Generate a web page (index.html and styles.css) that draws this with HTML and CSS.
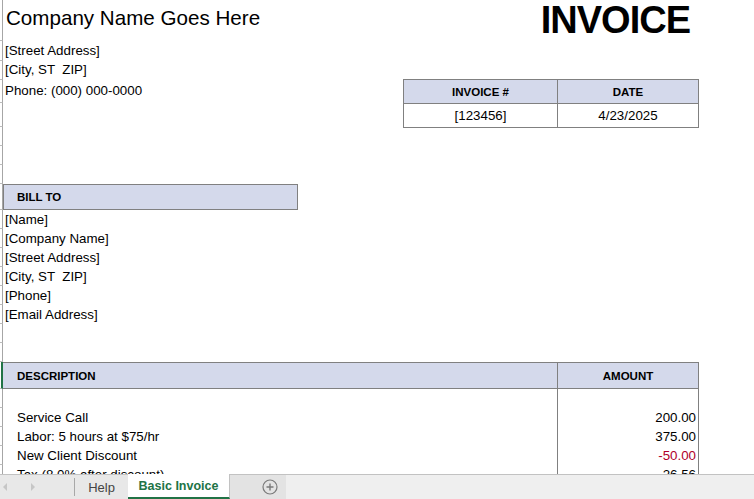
FILE: index.html
```html
<!DOCTYPE html>
<html lang="en">
<head>
    <meta charset="UTF-8" />
    <title>Basic Invoice</title>
    <link rel="stylesheet" href="styles.css">
</head>
<body>
    <div class="window">
        <div class="sheet">
            <!-- row header sliver with row boundaries -->
            <div class="gutter">
                <div class="h41"></div>
                <div class="h20"></div>
                <div class="h19"></div>
                <div class="h23"></div>
                <div class="h24"></div>
                <div class="h19"></div>
                <div class="h19"></div>
                <div class="h19"></div>
                <div class="h26"></div>
                <div class="h19"></div>
                <div class="h19"></div>
                <div class="h19"></div>
                <div class="h19"></div>
                <div class="h19"></div>
                <div class="h19"></div>
                <div class="h19"></div>
                <div class="h19"></div>
                <div class="h27 sel"></div>
                <div class="h19"></div>
                <div class="h19"></div>
                <div class="h19"></div>
                <div class="h19"></div>
                <div class="h19"></div>
            </div>

            <div class="page">
                <header class="top">
                    <h1 class="company">Company Name Goes Here</h1>
                    <div class="title">INVOICE</div>
                </header>

                <section class="from">
                    <div class="lines">
                        <div class="line h20">[Street Address]</div>
                        <div class="line">[City, ST  ZIP]</div>
                        <div class="line h23">Phone: (000) 000-0000</div>
                    </div>
                    <div class="meta">
                        <div class="th">INVOICE #</div>
                        <div class="th">DATE</div>
                        <div>[123456]</div>
                        <div>4/23/2025</div>
                    </div>
                </section>

                <section class="bill">
                    <div class="band">BILL TO</div>
                    <div class="line">[Name]</div>
                    <div class="line">[Company Name]</div>
                    <div class="line">[Street Address]</div>
                    <div class="line">[City, ST  ZIP]</div>
                    <div class="line">[Phone]</div>
                    <div class="line">[Email Address]</div>
                </section>

                <section class="items">
                    <div class="th desc">DESCRIPTION</div>
                    <div class="th">AMOUNT</div>

                    <div class="td desc"></div>
                    <div class="td amt"></div>
                    <div class="td desc">Service Call</div>
                    <div class="td amt">200.00</div>
                    <div class="td desc">Labor: 5 hours at $75/hr</div>
                    <div class="td amt">375.00</div>
                    <div class="td desc">New Client Discount</div>
                    <div class="td amt neg">-50.00</div>
                    <div class="td desc">Tax (8.0% after discount)</div>
                    <div class="td amt">26.56</div>
                </section>
            </div>
        </div>

        <footer class="tabs">
            <div class="nav">
                <svg width="8" height="10" viewBox="0 0 8 10"><polygon points="6,1 2,5 6,9" fill="#c6c6c6"/></svg>
                <svg width="8" height="10" viewBox="0 0 8 10"><polygon points="2,1 6,5 2,9" fill="#c6c6c6"/></svg>
            </div>
            <div class="tab">Help</div>
            <div class="tab active">Basic Invoice</div>
            <div class="add">
                <svg width="16" height="16" viewBox="0 0 16 16">
                    <circle cx="8" cy="8" r="7" fill="none" stroke="#7a7a7a" stroke-width="1.2"/>
                    <path d="M8 4.5v7M4.5 8h7" stroke="#7a7a7a" stroke-width="1.4"/>
                </svg>
            </div>
        </footer>
    </div>
</body>
</html>
```

FILE: styles.css
```css
/* --- Reset & base --- */
* {
    margin: 0;
    padding: 0;
    box-sizing: border-box;
}

body {
    font-family: "Liberation Sans", Arial, sans-serif;
    font-size: 13.33px;
    color: #000;
    background: #fff;
}

.window {
    height: 499px;
    display: flex;
    flex-direction: column;
    overflow: hidden;
}

/* --- Sheet area --- */
.sheet {
    flex: 1;
    min-height: 0;
    display: flex;
    overflow: hidden;
}

.gutter {
    width: 3px;
    flex: none;
    display: flex;
    flex-direction: column;
}

.gutter div {
    flex: none;
    border-right: 1px solid #a6a6a6;
    border-bottom: 1px solid #bcbcbc;
}

.gutter .sel {
    border-right: 2px solid #217346;
}

.h19 { height: 19px; }
.h20 { height: 20px; }
.h23 { height: 23px; }
.h24 { height: 24px; }
.h26 { height: 26px; }
.h27 { height: 27px; }
.h41 { height: 41px; }

.page {
    width: 751px;
    flex: none;
}

/* --- Heading row --- */
.top {
    width: 695px;
    height: 41px;
    display: flex;
    justify-content: space-between;
    align-items: flex-start;
}

.company {
    font-size: 20.6px;
    font-weight: normal;
    line-height: 24px;
    padding: 6px 0 0 3px;
}

.title {
    font-size: 38px;
    font-weight: bold;
    line-height: 40px;
    letter-spacing: -1px;
    padding-right: 8px;
}

/* plain text lines */
.line {
    height: 19px;
    line-height: 19px;
    padding-left: 2px;
    white-space: pre;
}

.line.h20 { line-height: 20px; }
.line.h23 { line-height: 24px; }

/* --- Sender + invoice number --- */
.from {
    display: flex;
}

.lines {
    width: 400px;
}

.meta {
    margin-top: 38px;
    align-self: flex-start;
    display: grid;
    grid-template-columns: 154px 141px;
    border-left: 1px solid #808080;
    border-top: 1px solid #808080;
}

.meta > div {
    height: 24px;
    border-right: 1px solid #808080;
    border-bottom: 1px solid #808080;
    display: flex;
    align-items: center;
    justify-content: center;
}

.th {
    background: #d4d9eb;
    font-weight: bold;
    font-size: 11.5px;
}

/* --- Bill to --- */
.bill {
    margin-top: 56px;
}

.band {
    width: 295px;
    height: 26px;
    border: 1px solid #808080;
    background: #d4d9eb;
    font-weight: bold;
    font-size: 11.5px;
    padding-left: 13px;
    display: flex;
    align-items: center;
}

/* --- Line items --- */
.items {
    margin-top: 38px;
    display: grid;
    grid-template-columns: 555px 141px;
}

.items .th {
    height: 27px;
    border-top: 1px solid #808080;
    border-bottom: 1px solid #808080;
    border-right: 1px solid #808080;
    display: flex;
    align-items: center;
    justify-content: center;
}

.items .th.desc {
    justify-content: flex-start;
    padding-left: 14px;
}

.td {
    height: 19px;
    line-height: 19px;
    border-right: 1px solid #808080;
}

.td.desc {
    padding-left: 14px;
}

.td.amt {
    text-align: right;
    padding-right: 2px;
}

.neg {
    color: #b0002b;
}

/* --- Sheet tabs --- */
.tabs {
    height: 25px;
    flex: none;
    display: flex;
    background: #efefef;
    border-top: 1px solid #c2c2c2;
    font-size: 13px;
}

.nav {
    width: 75px;
    display: flex;
    align-items: center;
    gap: 20px;
    padding-left: 1px;
    background: #e8e8e8;
    position: relative;
}

.nav::after {
    content: "";
    position: absolute;
    right: 0;
    top: 3px;
    bottom: 3px;
    border-right: 1px solid #a8a8a8;
}

.tab {
    width: 53px;
    display: flex;
    align-items: center;
    justify-content: center;
    color: #444;
    background: #e8e8e8;
}

.tab.active {
    width: 102px;
    margin-top: -1px;
    background: #fff;
    color: #217346;
    font-weight: bold;
    font-size: 12.5px;
    border-right: 1px solid #c2c2c2;
    border-bottom: 2px solid #217346;
}

.add {
    width: 56px;
    display: flex;
    align-items: center;
    justify-content: flex-end;
    padding-right: 8px;
    background: #e3e3e3;
}
```
